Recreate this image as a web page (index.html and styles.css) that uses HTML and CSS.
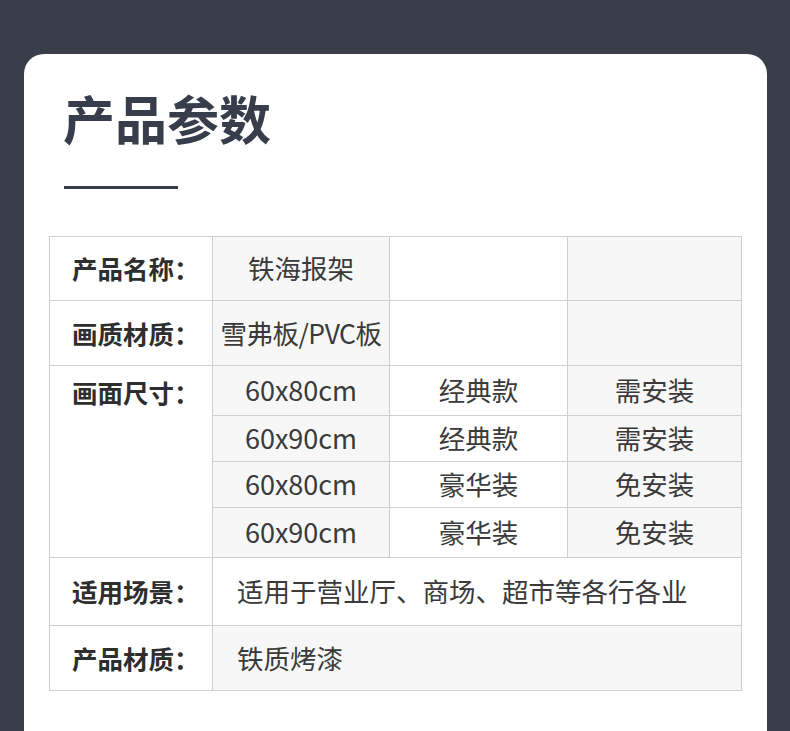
FILE: index.html
```html
<!DOCTYPE html>
<html lang="zh-CN">
<head>
<meta charset="utf-8">
<title>产品参数</title>
<link rel="stylesheet" href="styles.css">
</head>
<body>
<main class="card">
  <header class="head">
    <h1 class="title">产品参数</h1>
    <div class="rule"></div>
  </header>
  <section class="spec">
    <div class="cell label">产品名称：</div>
    <div class="cell val grey">铁海报架</div>
    <div class="cell val"></div>
    <div class="cell val grey"></div>

    <div class="cell label">画质材质：</div>
    <div class="cell val grey tight">雪弗板/PVC板</div>
    <div class="cell val"></div>
    <div class="cell val grey"></div>

    <div class="cell label top span4">画面尺寸：</div>
    <div class="cell val size grey">60x80cm</div>
    <div class="cell val">经典款</div>
    <div class="cell val grey">需安装</div>

    <div class="cell val size grey">60x90cm</div>
    <div class="cell val">经典款</div>
    <div class="cell val grey">需安装</div>

    <div class="cell val size grey">60x80cm</div>
    <div class="cell val">豪华装</div>
    <div class="cell val grey">免安装</div>

    <div class="cell val size grey">60x90cm</div>
    <div class="cell val">豪华装</div>
    <div class="cell val grey">免安装</div>

    <div class="cell label">适用场景：</div>
    <div class="cell val wide">适用于营业厅、商场、超市等各行各业</div>

    <div class="cell label">产品材质：</div>
    <div class="cell val wide grey">铁质烤漆</div>
  </section>
</main>
</body>
</html>
```
FILE: styles.css
```css
html, body {
  margin: 0;
  padding: 0;
}
body {
  background: #393e4a;
  font-family: "Noto Sans CJK SC", "Noto Sans", sans-serif;
  height: 731px;
  overflow: hidden;
}
.card {
  margin: 54px 23px 0 24px;
  background: #ffffff;
  border-radius: 20px 20px 0 0;
  padding: 38px 25px 0 25px;
  min-height: 760px;
  box-sizing: border-box;
}
.head {
  padding-left: 14px;
}
.title {
  margin: 0;
  font-size: 52px;
  line-height: 52px;
  font-weight: 700;
  color: #373d4a;
}
.rule {
  margin-top: 42px;
  margin-left: 1px;
  width: 114px;
  height: 3px;
  background: #373d4a;
}
.spec {
  margin-top: 47px;
  width: 693px;
  box-sizing: border-box;
  display: grid;
  grid-template-columns: 162px 176px 177px 173px;
  grid-template-rows: 63px 64px 49px 45px 45px 49px 67px 64px;
  gap: 1px;
  padding: 1px;
  background: #cfcfcf;
}
.cell {
  background: #ffffff;
  display: flex;
  align-items: center;
  color: #3a3a3a;
  white-space: nowrap;
  padding-bottom: 2px;
  box-sizing: border-box;
}
.grey {
  background: #f7f7f7;
}
.label {
  font-size: 25.5px;
  font-weight: 700;
  color: #2e2e2e;
  padding-left: 22px;
}
.label.top {
  align-items: flex-start;
  line-height: 52px;
}
.span4 {
  grid-row: span 4;
}
.val {
  justify-content: center;
  font-size: 26.5px;
}
.size {
  font-size: 27px;
}
.tight {
  letter-spacing: -0.5px;
}
.wide {
  grid-column: span 3;
  justify-content: flex-start;
  padding-left: 24px;
}
```
